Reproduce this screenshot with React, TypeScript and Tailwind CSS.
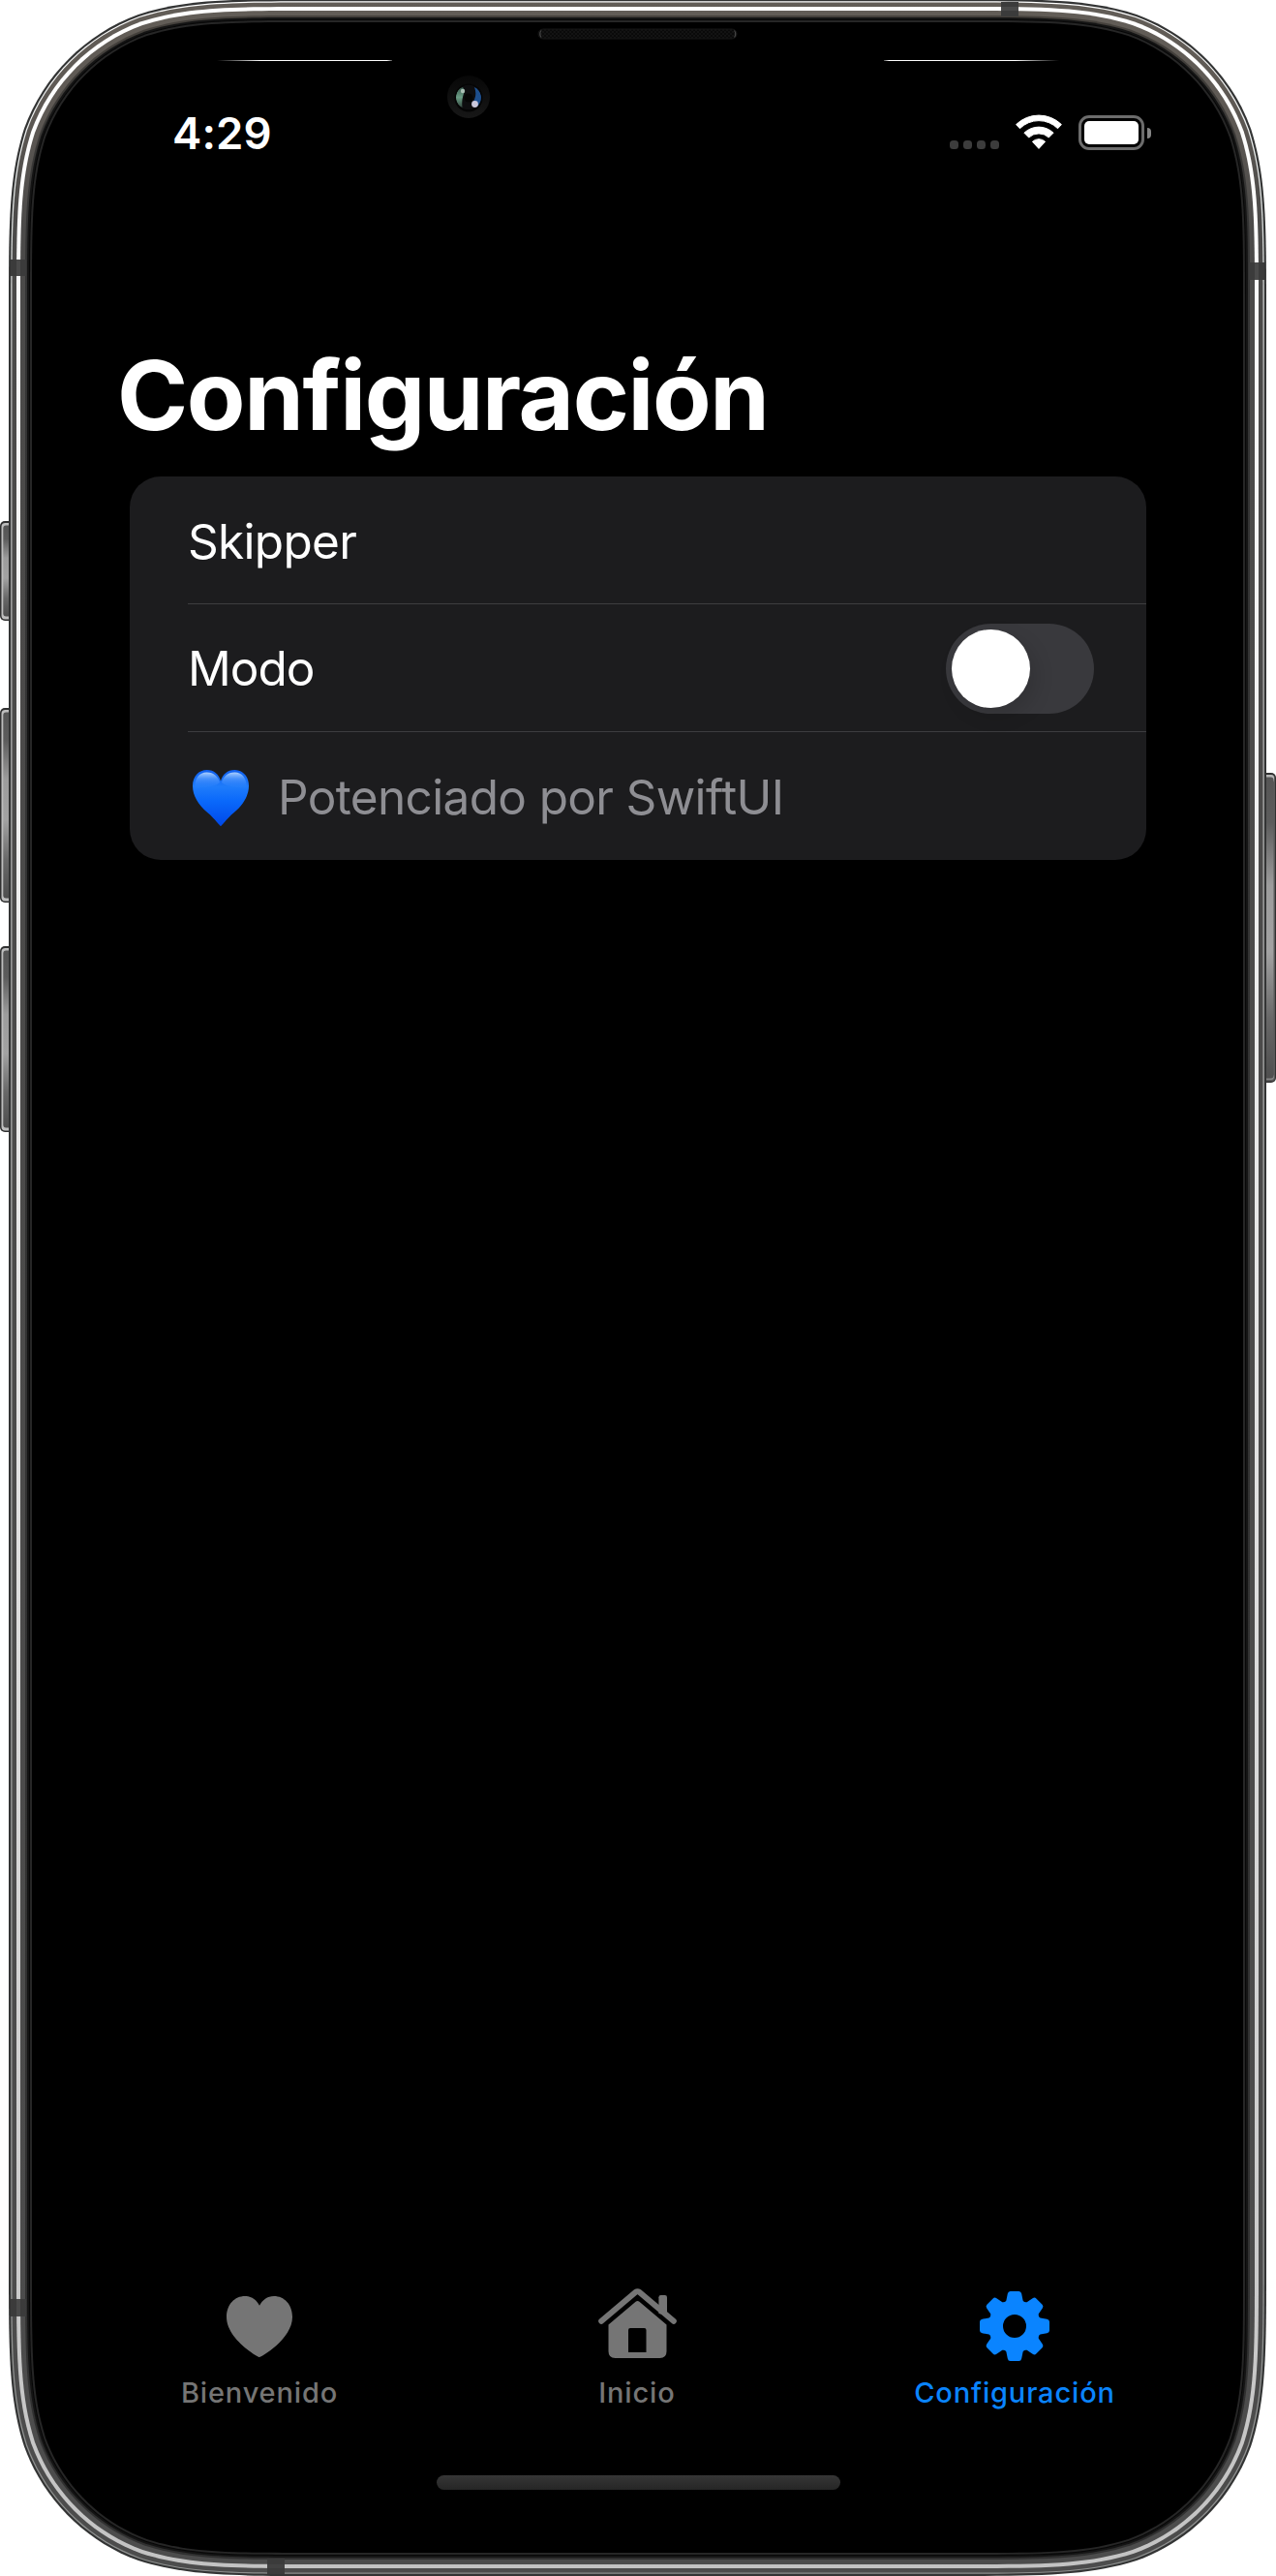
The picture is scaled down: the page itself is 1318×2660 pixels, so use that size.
import React from "react";

const PHONE = { x: 9, y: -1, w: 1299, h: 2661, r: 212 };

// Rounded rectangle with continuous-curvature corners, inset from the phone's outline.
function outline(inset: number) {
  const x0 = PHONE.x + inset;
  const y0 = PHONE.y + inset;
  const x1 = PHONE.x + PHONE.w - inset;
  const y1 = PHONE.y + PHONE.h - inset;
  const r = PHONE.r - inset;
  const a = 1.5287 * r;
  const b = 1.0885 * r;
  const c = 0.8684 * r;
  const d = 0.6315 * r;
  const e = 0.0749 * r;
  const f = 0.3728 * r;
  const g = 0.1691 * r;
  return [
    `M${x0 + a} ${y0}H${x1 - a}`,
    `C${x1 - b} ${y0} ${x1 - c} ${y0} ${x1 - d} ${y0 + e}`,
    `C${x1 - f} ${y0 + g} ${x1 - g} ${y0 + f} ${x1 - e} ${y0 + d}`,
    `C${x1} ${y0 + c} ${x1} ${y0 + b} ${x1} ${y0 + a}`,
    `V${y1 - a}`,
    `C${x1} ${y1 - b} ${x1} ${y1 - c} ${x1 - e} ${y1 - d}`,
    `C${x1 - g} ${y1 - f} ${x1 - f} ${y1 - g} ${x1 - d} ${y1 - e}`,
    `C${x1 - c} ${y1} ${x1 - b} ${y1} ${x1 - a} ${y1}`,
    `H${x0 + a}`,
    `C${x0 + b} ${y1} ${x0 + c} ${y1} ${x0 + d} ${y1 - e}`,
    `C${x0 + f} ${y1 - g} ${x0 + g} ${y1 - f} ${x0 + e} ${y1 - d}`,
    `C${x0} ${y1 - c} ${x0} ${y1 - b} ${x0} ${y1 - a}`,
    `V${y0 + a}`,
    `C${x0} ${y0 + b} ${x0} ${y0 + c} ${x0 + e} ${y0 + d}`,
    `C${x0 + g} ${y0 + f} ${x0 + f} ${y0 + g} ${x0 + d} ${y0 + e}`,
    `C${x0 + c} ${y0} ${x0 + b} ${y0} ${x0 + a} ${y0}Z`,
  ].join("");
}

const RINGS: [number, string][] = [
  [0, "#333434"],
  [2.2, "url(#edge)"],
  [3.5, "url(#metal)"],
  [8, "url(#shine)"],
  [12, "url(#metal)"],
  [17, "url(#metalDim)"],
  [19, "#141414"],
  [21, "#070707"],
  [22, "#262626"],
  [24, "#000000"],
];

const SIDE_BUTTONS = [
  { x: 0, y: 538, h: 103, left: true },
  { x: 0, y: 731, h: 201, left: true },
  { x: 0, y: 977, h: 192, left: true },
  { x: 1308, y: 798, h: 320, left: false },
];

function PhoneBody() {
  return (
    <svg className="pointer-events-none absolute inset-0" width="1318" height="2660" viewBox="0 0 1318 2660" aria-hidden="true">
      <defs>
        <linearGradient id="edge" x1="0" y1="0" x2="0" y2="1">
          <stop offset="0" stopColor="#ffffff" />
          <stop offset="0.08" stopColor="#dfe3e2" />
          <stop offset="0.15" stopColor="#b9b9b9" />
          <stop offset="1" stopColor="#8d8f8e" />
        </linearGradient>
        <linearGradient id="metal" x1="0" y1="0" x2="0" y2="1">
          <stop offset="0" stopColor="#625d57" />
          <stop offset="0.04" stopColor="#5e5954" />
          <stop offset="0.085" stopColor="#4b4a49" />
          <stop offset="1" stopColor="#4c4c4c" />
        </linearGradient>
        <linearGradient id="metalDim" x1="0" y1="0" x2="0" y2="1">
          <stop offset="0" stopColor="#45413c" />
          <stop offset="0.08" stopColor="#343434" />
          <stop offset="1" stopColor="#303030" />
        </linearGradient>
        <linearGradient id="shine" x1="0" y1="0" x2="0" y2="1">
          <stop offset="0" stopColor="#ffffff" />
          <stop offset="0.2" stopColor="#f6f6f6" />
          <stop offset="0.5" stopColor="#e6e6e6" />
          <stop offset="1" stopColor="#c3c3c3" />
        </linearGradient>
        <linearGradient id="button" x1="0" y1="0" x2="0" y2="1">
          <stop offset="0" stopColor="#555555" />
          <stop offset="0.15" stopColor="#5c5c5c" />
          <stop offset="0.36" stopColor="#9c9c9c" />
          <stop offset="0.58" stopColor="#a2a2a2" />
          <stop offset="0.8" stopColor="#686868" />
          <stop offset="1" stopColor="#4e4e4e" />
        </linearGradient>
        <linearGradient id="streakLeft">
          <stop offset="0" stopColor="#fff" stopOpacity="0" />
          <stop offset="0.25" stopColor="#fff" />
          <stop offset="0.97" stopColor="#fff" />
          <stop offset="1" stopColor="#fff" stopOpacity="0.3" />
        </linearGradient>
        <linearGradient id="streakRight">
          <stop offset="0" stopColor="#fff" stopOpacity="0.3" />
          <stop offset="0.03" stopColor="#fff" />
          <stop offset="0.75" stopColor="#fff" />
          <stop offset="1" stopColor="#fff" stopOpacity="0" />
        </linearGradient>
        <linearGradient id="ring" x1="0" y1="0" x2="0" y2="1">
          <stop offset="0" stopColor="#070707" />
          <stop offset="1" stopColor="#171717" />
        </linearGradient>
        <linearGradient id="green" x1="0" y1="0" x2="0" y2="1">
          <stop offset="0" stopColor="#3c5c50" />
          <stop offset="0.5" stopColor="#6a9c84" />
          <stop offset="1" stopColor="#33483f" />
        </linearGradient>
        <pattern id="mesh" width="4" height="4" patternUnits="userSpaceOnUse">
          <rect width="4" height="4" fill="#0a0a0a" />
          <rect width="2" height="2" fill="#131313" />
          <rect x="2" y="2" width="2" height="2" fill="#131313" />
        </pattern>
        <clipPath id="lens">
          <circle cx="484" cy="100.5" r="13" />
        </clipPath>
      </defs>

      {SIDE_BUTTONS.map((b) => (
        <g key={b.y}>
          <rect x={b.left ? b.x : b.x - 8} y={b.y} width={b.left ? 16 : 18} height={b.h} rx="5" fill="#303030" />
          <rect x={b.left ? 1.5 : 1298} y={b.y + 2} width={b.left ? 14 : 19} height={b.h - 3.5} rx="4" fill={b.left ? "#bdbdbd" : "#5b5b5b"} />
          {!b.left && <rect x="1298" y={b.y + 2} width="18" height="8" rx="3" fill="#b4b4b4" />}
          {!b.left && <rect x="1298" y={b.y + b.h - 9} width="18" height="6" rx="3" fill="#858585" />}
          <rect x={b.left ? 3.3 : 1298} y={b.y + 4.5} width={b.left ? 12 : 17.5} height={b.h - 9} rx="3" fill="url(#button)" />
        </g>
      ))}

      {RINGS.map(([inset, fill]) => (
        <path key={inset} d={outline(inset)} fill={fill} />
      ))}

      <g fill="#3b3b3b">
        <rect x="11" y="268" width="16" height="17" />
        <rect x="1290" y="271" width="16" height="18" />
        <rect x="1034" y="2" width="18" height="15" />
        <rect x="11" y="2374" width="16" height="18" />
        <rect x="276" y="2642" width="18" height="16" />
      </g>
      <g fill="#4a4a4a">
        <rect x="17" y="268" width="4" height="17" />
        <rect x="1296" y="271" width="4" height="18" />
        <rect x="1034" y="7" width="18" height="4" />
        <rect x="17" y="2374" width="4" height="18" />
        <rect x="276" y="2648" width="18" height="4" fill="#424242" />
      </g>

      <rect x="224" y="62" width="181" height="1" fill="url(#streakLeft)" />
      <rect x="913" y="62" width="181" height="1" fill="url(#streakRight)" />

      <rect x="556" y="30" width="205" height="10" rx="5" fill="url(#mesh)" stroke="#161616" />
      <path d="M559 31.5Q556.5 35 559 38.5M758.500 31.5Q761 35 758.500 38.5" fill="none" stroke="#454545" strokeWidth="1.2" />

      <circle cx="484" cy="100" r="22" fill="url(#ring)" />
      <circle cx="484" cy="101" r="14.500" fill="#050505" />
      <g clipPath="url(#lens)">
        <circle cx="484" cy="100.5" r="13" fill="#0d0d0f" />
        <path d="M478 90C469 93 468 107 477.500 111C476.500 103 478.500 98 480 94Z" fill="url(#green)" />
        <path d="M490 90C492 95 492 101 488 106L494 110C500 103 497 93 490 90Z" fill="#1d4f8e" />
      </g>
      <circle cx="484" cy="101" r="4.500" fill="#050505" />
      <circle cx="478" cy="94" r="2.200" fill="#a9bfb4" />
      <circle cx="490.500" cy="107.500" r="3.400" fill="#cbc8dc" />
    </svg>
  );
}

function WifiIcon() {
  return (
    <svg width="48" height="36" viewBox="0 0 48 36" className="block" fill="#fff" stroke="#fff" strokeWidth="1" strokeLinejoin="round">
      <path d="M.6 10.600A33.500 33.500 0 0 1 47.400 10.600L43.600 14.700A27.800 27.800 0 0 0 4.400 14.700Z" />
      <path d="M8.900 19.200A21.800 21.800 0 0 1 39.100 19.200L34.300 24A15 15 0 0 0 13.700 24Z" />
      <path d="M17.400 28.300A9.600 9.600 0 0 1 30.600 28.300L24 35.400Z" />
    </svg>
  );
}

function HeartIcon() {
  return (
    <svg width="68" height="63" viewBox="0 0 68 63" fill="currentColor">
      <path d="M34 63C32.500 63 0 44.500 0 21.500C0 8.500 8.500 0 19 0C26 0 31 4 34 9.800C37 4 42 0 49 0C59.500 0 68 8.500 68 21.500C68 44.500 35.500 63 34 63Z" />
    </svg>
  );
}

function HouseIcon() {
  return (
    <svg width="81" height="72" viewBox="0 0 81 72" fill="currentColor" className="mb-1.5">
      <path
        fillRule="evenodd"
        d="M38.600 13.800Q40.500 12 42.400 13.800L70.500 37.500V65Q70.500 72 63.500 72H17.500Q10.500 72 10.500 65V37.500ZM33 41Q31 41 31 43V66H49.500V43Q49.500 41 47.500 41Z"
      />
      <path d="M62.400 26V9.200Q62.400 7 64.600 7H68.800Q71 7 71 9.200V28Z" />
      <path d="M3.200 33.800L38.700 3.800Q40.500 2.600 42.300 3.800L77.800 33.800" fill="none" stroke="currentColor" strokeWidth="6" strokeLinecap="round" strokeLinejoin="round" />
    </svg>
  );
}

const TEETH = [0, 45, 90, 135, 180, 225, 270, 315];

function GearIcon() {
  return (
    <svg width="72" height="72" viewBox="-36 -36 72 72" fill="currentColor">
      <path fillRule="evenodd" d="M0-27A27 27 0 1 1 0 27A27 27 0 1 1 0-27ZM0-12A12 12 0 1 0 0 12A12 12 0 1 0 0-12Z" />
      {TEETH.map((deg) => (
        <path key={deg} transform={`rotate(${deg})`} d="M-10.500-24L-8.600-26.500L-7.200-33.500Q-6.700-36-4.400-36H4.400Q6.700-36 7.200-33.500L8.600-26.500L10.500-24Z" />
      ))}
    </svg>
  );
}

function BlueHeart() {
  return (
    <svg width="58" height="58" viewBox="0 0 59 58" preserveAspectRatio="none" className="mt-0.5 block">
      <defs>
        <linearGradient id="bh" x1="0" y1="0" x2="0" y2="1">
          <stop offset="0" stopColor="#1060ef" />
          <stop offset="0.3" stopColor="#1f7cfa" />
          <stop offset="0.55" stopColor="#0a69fb" />
          <stop offset="1" stopColor="#0048e8" />
        </linearGradient>
        <linearGradient id="gloss" x1="0" y1="0" x2="0" y2="1">
          <stop offset="0" stopColor="#b4d6ff" stopOpacity="0.95" />
          <stop offset="0.4" stopColor="#5fa4ff" stopOpacity="0.6" />
          <stop offset="1" stopColor="#2c83ff" stopOpacity="0" />
        </linearGradient>
      </defs>
      <path fill="url(#bh)" d="M29.500 58C28.500 58 24 51 15.500 44C6 36 0 26.500 0 16.500C0 6.500 6.500 0 15 0C22.500 0 27.500 4.500 29.500 11.500C31.500 4.500 36.500 0 44 0C52.500 0 59 6.500 59 16.500C59 26.500 53 36 43.500 44C35 51 30.500 58 29.500 58Z" />
      <path fill="url(#gloss)" d="M2.500 20C1.500 9 7 2.600 14.800 2.600C22.500 2.600 26.500 7 28.500 13C22 19 8 17 2.500 20Z" />
      <path fill="url(#gloss)" d="M56.500 20C57.500 9 52 2.600 44.200 2.600C36.500 2.600 32.500 7 30.500 13C37 19 51 17 56.500 20Z" />
    </svg>
  );
}

function StatusBar() {
  return (
    <div className="flex h-[50px] items-center justify-between pr-[129px] pl-[178px]">
      <time className="pt-0.5 text-[45.5px] leading-[50px] font-semibold tracking-[0.1px] text-white">4:29</time>
      <div className="flex items-center">
        <div className="mt-6 mr-[17px] flex gap-[5px]">
          {[0, 1, 2, 3].map((i) => (
            <span key={i} className="size-[9px] rounded-[3.5px] bg-[#3c3c3c]" />
          ))}
        </div>
        <div className="-mt-0.5 mr-[17px]">
          <WifiIcon />
        </div>
        <div className="flex h-9 w-[68px] rounded-[11px] border-3 border-[#6c6c6c] p-[3px]">
          <span className="flex-1 rounded-[5px] bg-white" />
        </div>
        <span className="ml-[3px] h-[11px] w-1 rounded-r-full bg-[#858585]" />
      </div>
    </div>
  );
}

function Toggle() {
  return (
    <button type="button" role="switch" aria-checked="false" aria-label="Modo" className="flex h-[93px] w-[153px] rounded-full bg-[#39393d] p-1.5">
      <span className="size-[81px] rounded-full bg-white shadow-[6px_8px_20px_rgba(0,0,0,0.13)]" />
    </button>
  );
}

const TABS = [
  { label: "Bienvenido", icon: <HeartIcon />, active: false },
  { label: "Inicio", icon: <HouseIcon />, active: false },
  { label: "Configuración", icon: <GearIcon />, active: true },
];

export default function App() {
  return (
    <div className="relative h-[2660px] w-[1318px] overflow-hidden bg-white font-['Inter',sans-serif]">
      <PhoneBody />
      <div className="relative flex h-full flex-col pt-[112px]">
        <StatusBar />
        <h1 className="mt-[186px] pl-[121px] text-[99px] leading-[120px] font-bold tracking-[-1.4px] text-white">Configuración</h1>
        <section className="mt-6 mr-[134px] ml-[134px] flex h-[396px] flex-col rounded-[32px] bg-[#1c1c1e] pl-[60px] text-[49.5px] text-white">
          <div className="flex h-[132px] items-center border-b border-[#3d3d40] pt-[3px]">
            <span className="tracking-[-0.7px]">Skipper</span>
          </div>
          <div className="flex h-[132px] items-center justify-between border-b border-[#3d3d40] pt-0.5 pr-[54px]">
            <span className="tracking-[-1px]">Modo</span>
            <Toggle />
          </div>
          <div className="flex h-[132px] items-center pt-0.5 pl-[5px]">
            <BlueHeart />
            <span className="ml-[30px] tracking-[-0.65px] text-[#8e8e93]">Potenciado por SwiftUI</span>
          </div>
        </section>
        <nav className="mt-auto mr-0.5 flex justify-center">
          {TABS.map((tab) => (
            <button key={tab.label} type="button" className={`flex w-[390px] flex-col items-center ${tab.active ? "text-[#0a84ff]" : "text-[#757575]"}`}>
              <span className="flex h-[84px] items-center">{tab.icon}</span>
              <span className="mt-2 text-[29px] leading-[37px] font-medium tracking-[0.85px]">{tab.label}</span>
            </button>
          ))}
        </nav>
        <div className="mt-[67px] mb-[89px] ml-[451px] h-[15px] w-[417px] rounded-full bg-linear-to-b from-[#363636] to-[#262626]" />
      </div>
    </div>
  );
}
